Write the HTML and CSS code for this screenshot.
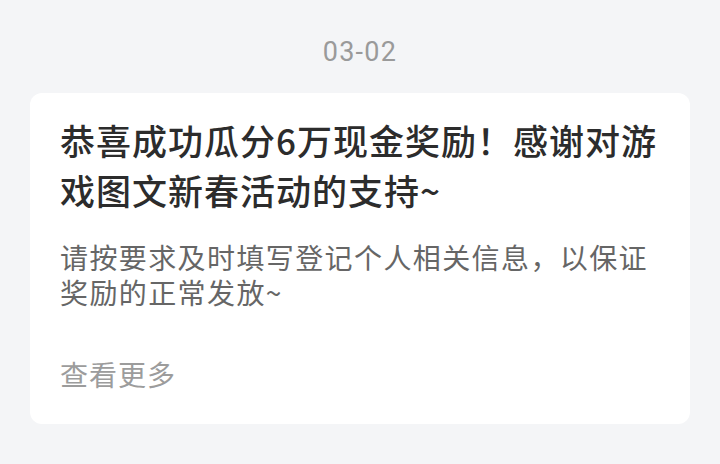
FILE: index.html
```html
<!DOCTYPE html>
<html lang="zh-CN">
<head>
<meta charset="utf-8">
<link rel="stylesheet" href="styles.css">
</head>
<body>
<div class="page">
  <div class="date">03-02</div>
  <div class="card">
    <div class="title">恭喜成功瓜分6万现金奖励！感谢对游<br>戏图文新春活动的支持~</div>
    <div class="desc">请按要求及时填写登记个人相关信息，以保证<br>奖励的正常发放~</div>
    <div class="more">查看更多</div>
  </div>
</div>
</body>
</html>
```
FILE: styles.css
```css
html, body {
  margin: 0;
  padding: 0;
  background: #f4f5f7;
}
.page {
  width: 720px;
  height: 464px;
  display: flex;
  flex-direction: column;
  font-family: "Noto Sans CJK SC", "Noto Sans", sans-serif;
}
.date {
  margin-top: 37px;
  height: 30px;
  line-height: 30px;
  text-align: center;
  font-family: Roboto, "Noto Sans", sans-serif;
  font-size: 27px;
  letter-spacing: 1.3px;
  color: #9a9a9a;
}
.card {
  margin: 26px 30px 0 30px;
  background: #ffffff;
  border-radius: 12px;
  padding: 22px 30px 32px 30px;
  display: flex;
  flex-direction: column;
}
.title {
  font-size: 35px;
  line-height: 50px;
  letter-spacing: 1px;
  font-weight: 500;
  color: #2c2c2c;
  white-space: nowrap;
}
.desc {
  margin-top: 25px;
  font-size: 28px;
  line-height: 35px;
  letter-spacing: 1.4px;
  color: #666666;
  white-space: nowrap;
}
.more {
  margin-top: 47px;
  font-size: 28px;
  line-height: 35px;
  letter-spacing: 1px;
  color: #9c9c9c;
}
```
